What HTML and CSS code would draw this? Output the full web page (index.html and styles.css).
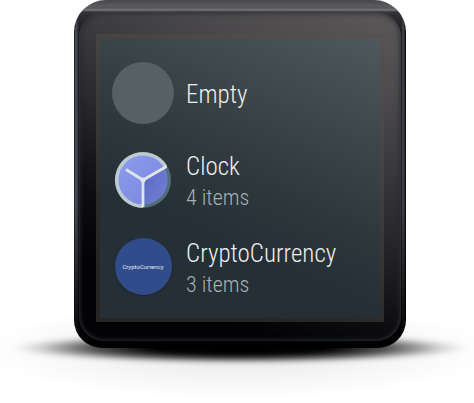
FILE: index.html
```
<!DOCTYPE html>
<html lang="en">
<head>
<meta charset="utf-8">
<meta name="viewport" content="width=device-width, initial-scale=1">
<title>Watch folders</title>
<link rel="stylesheet" href="styles.css">
</head>
<body>
<main class="stage">
  <div class="watch">
    <div class="face">
      <ul class="screen">
        <li class="row">
          <span class="icon"><span class="blank"></span></span>
          <span class="label"><span class="name">Empty</span></span>
        </li>
        <li class="row">
          <span class="icon">
            <svg class="clock" viewBox="0 0 58 58" aria-hidden="true">
              <defs>
                <linearGradient id="dial" x1="0" y1="0" x2="1" y2="1">
                  <stop offset="0" stop-color="#8f9def"/>
                  <stop offset="1" stop-color="#7583da"/>
                </linearGradient>
                <linearGradient id="shade" x1="0" y1="0" x2="1" y2="1">
                  <stop offset="0" stop-color="#4c5cae" stop-opacity=".85"/>
                  <stop offset="1" stop-color="#6673cb" stop-opacity=".4"/>
                </linearGradient>
              </defs>
              <circle cx="29" cy="29" r="28" fill="#516e7b"/>
              <path d="M29 57A28 28 0 1 1 53.200 15L29 29Z" fill="#bdcbd0"/>
              <circle cx="29" cy="29" r="24.500" fill="url(#dial)"/>
              <path d="M29 29L50 17A24.500 24.500 0 0 1 29 53.500Z" fill="url(#shade)"/>
              <path d="M12 18.500L29 29L52.500 15.500M29 29V56" fill="none" stroke="#dfe4ed" stroke-width="2.800"/>
              <circle cx="29" cy="29" r="2.500" fill="#dfe4ed"/>
            </svg>
          </span>
          <span class="label"><span class="name">Clock</span><span class="count">4 items</span></span>
        </li>
        <li class="row">
          <span class="icon"><span class="badge">CryptoCurrency</span></span>
          <span class="label"><span class="name">CryptoCurrency</span><span class="count">3 items</span></span>
        </li>
      </ul>
    </div>
  </div>
</main>
</body>
</html>
```
FILE: styles.css
```
* { box-sizing: border-box; }

body {
  margin: 0;
  background: #fff;
  font-family: "Roboto Condensed", Roboto, sans-serif;
}

.stage {
  isolation: isolate;
  min-height: 100vh;
  padding: 0 68px 55px 74px;
  background: radial-gradient(ellipse 54% 12% at 50% 87%, #e6e6e6, #fff);
}

.watch {
  position: relative;
  padding: 12px 5px 7px;
  border-radius: 32px 32px 28px 28px;
  background:
    linear-gradient(#47484b, #5a5a5b 6px, #56565a 8px, #77777c 10px, #343438 12px, transparent 34px),
    linear-gradient(transparent 60%, #000b 90%, #000),
    linear-gradient(90deg, #16171b, #55565f 2px, #14161b 5px, #000 50%, #15161a calc(100% - 5px), #4a4b50 calc(100% - 3px), #08080a);
}

.watch::before {
  content: "";
  position: absolute;
  z-index: -1;
  right: -62px;
  bottom: -16px;
  left: -62px;
  height: 32px;
  background: radial-gradient(closest-side, #000 40%, #000a 65%, #0006 77%, #0002 89%, transparent);
  filter: blur(2px);
}

.face {
  padding: 22px 17px 19px;
  border-radius: 25px;
  background: linear-gradient(204deg, #5b595a, #4b494b 20%, #29282b 48%, #0d0d10 68%, #030306 82%);
  box-shadow: inset 0 0 3px 1px #3d464c66, inset 0 0 6px #20252a;
}

.screen {
  display: flex;
  flex-direction: column;
  margin: 0;
  padding: 11px 12px 8px;
  list-style: none;
  border: 4px solid #56504c70;
  background: linear-gradient(204deg, #4f585d, #3e484d 24%, #2d373c 50%, #253036 68%, #253036) padding-box;
}

.row {
  display: flex;
  align-items: center;
  gap: 12px;
  height: 87px;
}

.icon {
  display: flex;
  flex: none;
  align-items: center;
  justify-content: center;
  width: 62px;
  height: 62px;
}

.blank {
  width: 62px;
  height: 62px;
  border-radius: 50%;
  background: #576062;
}

.clock {
  width: 58px;
  height: 58px;
}

.badge {
  display: flex;
  align-items: center;
  justify-content: center;
  width: 57px;
  height: 57px;
  border-radius: 50%;
  background: #304c8b;
  box-shadow: 0 1px 2px #0004;
  color: #e4e8f1;
  font: 6px Roboto, sans-serif;
}

.label {
  display: flex;
  flex-direction: column;
  padding-top: 4px;
  font-weight: 300;
}

.name {
  color: #edefef;
  font-size: 25px;
  line-height: 32px;
}

.count {
  color: #a9aeb0;
  font-size: 22px;
  line-height: 30px;
}
```
